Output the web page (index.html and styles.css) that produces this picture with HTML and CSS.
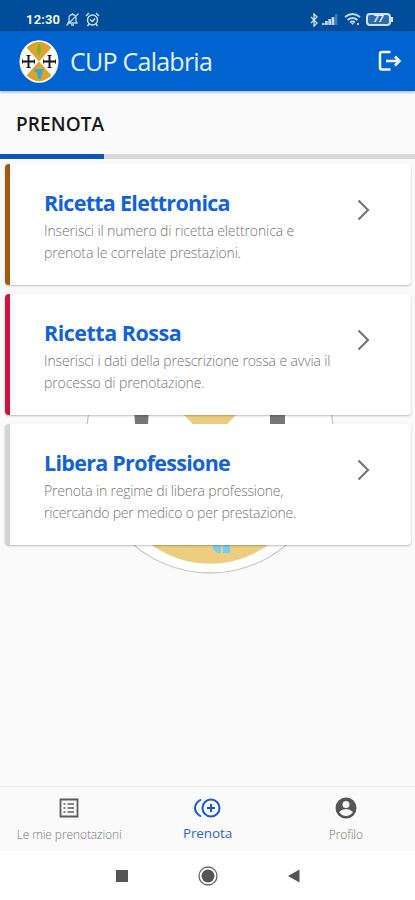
FILE: index.html
```html
<!DOCTYPE html>
<html lang="it">
<head>
    <meta charset="UTF-8">
    <meta name="viewport" content="width=device-width, initial-scale=1.0">
    <title>CUP Calabria</title>
    <link rel="stylesheet" href="styles.css">
</head>
<body>
    <div class="status">
        <span class="time">12:30</span>
        <svg class="mute" width="15" height="15" viewBox="0 0 15 15" fill="none" stroke="#c3d5eb" stroke-width="1.3">
            <path d="M3 11h9l-1-2V6a3.5 3.5 0 0 0-7 0v3zM6 13h3M7.500 1v2M1.500 13.500 13.500 1.500"/>
        </svg>
        <svg width="15" height="15" viewBox="0 0 15 15" fill="none" stroke="#d3e1f1" stroke-width="1.4">
            <circle cx="7.500" cy="8" r="5"/><path d="M1 4l3-3M14 4l-3-3M5 7.500l2.500 2 2.500-3M4 12l-1.500 2M11 12l1.500 2"/>
        </svg>
        <div class="signals">
            <svg width="9" height="14" viewBox="0 0 9 14" fill="none" stroke="#d3e1f1" stroke-width="1.3">
                <path d="M1 4l6 6-3 3V1l3 3-6 6"/>
            </svg>
            <svg class="bars" width="16" height="12" viewBox="0 0 16 12" fill="#c3d5eb">
                <path d="M0 9h2.500v2H0zM3 7h2.800v4H3zM6.300 5h2.800v6H6.300zM9.600 3h2.800v8H9.600z"/><path d="M13 0h2.300v11H13z" opacity=".35"/>
            </svg>
            <svg class="wifi" width="18" height="15" viewBox="0 0 18 15" fill="none" stroke="#c3d5eb" stroke-width="2">
                <path d="M1 5q7.500-6 15 0M3.500 8q5-4 10 0M6 10.500q2.500-2 5 0"/><path d="M7 11h3l-1.500 2zM13 11h2v2h-2z" fill="#c3d5eb" stroke="none"/>
            </svg>
            <div class="battery">77</div>
        </div>
    </div>

    <header>
        <svg class="logo" width="40" height="43" viewBox="0 0 40 43">
            <ellipse cx="20" cy="21.500" rx="19.500" ry="21.300" fill="#fff"/>
            <path d="M20 21.500 7.500 7.500Q20-4 32.500 7.500zM20 21.500 7.500 35.500Q20 47 32.500 35.500z" fill="#dfa32b"/>
            <path d="M20 3q2 2 1.500 5l1 3-2 3-.5 3-1-3-1.500-3 1-4z" fill="#75b82d"/>
            <path d="M16 29h9l-2 5-1 5h-3l-1-6-3-2z" fill="#36a9cf"/>
            <path d="M3 21.500h13M9.500 15v13M24 21.500h13M30.500 15v13" stroke="#151515" stroke-width="1.900"/>
            <path d="M3.500 19.500v4M15.500 19.500v4M7.500 15.500h4M7.500 27.500h4M24.500 19.500v4M36.500 19.500v4M28.500 15.500h4M28.500 27.500h4" stroke="#151515"/>
        </svg>
        <h1>CUP Calabria</h1>
        <svg class="logout" width="24" height="22" viewBox="0 0 24 22" fill="none" stroke="#f5f8fd" stroke-width="2.500">
            <path d="M12.500 2H4Q2 2 2 4v13.500q0 2 2 2h8.500M8 11h13M17 6.500 21.500 11 17 15.500"/>
        </svg>
    </header>

    <div class="tabs">
        <div class="tab">PRENOTA</div>
    </div>

    <main>
        <svg class="emblem" width="250" height="266" viewBox="0 0 250 266">
            <ellipse cx="125" cy="133" rx="124" ry="132" fill="#fff" stroke="#c8c8c8" stroke-width="1.300"/>
            <path d="M125 134 44 50A110 123 0 0 1 206 50z" fill="#edcd80"/>
            <path d="M125 134 44 216A110 123 0 0 0 206 216z" fill="#edcd80"/>
            <path d="M49 100h15l-1 16H50zM185 100h15v16h-15z" fill="#777"/>
            <path d="M128 225h8v20h-4l-4-4zM138 225h7v20h-7z" fill="#79cdf3"/>
        </svg>
        <a class="card brown">
            <div class="text">
                <h2>Ricetta Elettronica</h2>
                <p>Inserisci il numero di ricetta elettronica e<br>prenota le correlate prestazioni.</p>
            </div>
            <svg class="arrow" width="14" height="22" viewBox="0 0 14 22"><path d="M1.500 1.500 11 11l-9.500 9.500"/></svg>
        </a>
        <a class="card red">
            <div class="text">
                <h2>Ricetta Rossa</h2>
                <p>Inserisci i dati della prescrizione rossa e avvia il<br>processo di prenotazione.</p>
            </div>
            <svg class="arrow" width="14" height="22" viewBox="0 0 14 22"><path d="M1.500 1.500 11 11l-9.500 9.500"/></svg>
        </a>
        <a class="card grey">
            <div class="text">
                <h2>Libera Professione</h2>
                <p>Prenota in regime di libera professione,<br>ricercando per medico o per prestazione.</p>
            </div>
            <svg class="arrow" width="14" height="22" viewBox="0 0 14 22"><path d="M1.500 1.500 11 11l-9.500 9.500"/></svg>
        </a>
    </main>

    <nav>
        <a class="item">
            <svg width="28" height="24" viewBox="0 0 28 24" fill="none" stroke="#5d5d5d" stroke-width="1.800">
                <path d="M5.500 3.500h17v17h-17z"/><path d="M8.500 8h2M12.500 8h6.500M8.500 12h2M12.500 12h6.500M8.500 16h2M12.500 16h6.500" stroke-width="1.600"/>
            </svg>
            <span>Le mie prenotazioni</span>
        </a>
        <a class="item active">
            <svg width="28" height="24" viewBox="0 0 28 24" fill="none" stroke="#1758cb" stroke-width="2">
                <circle cx="18" cy="12" r="8.500"/><path d="M18 8v8M14 12h8M8 3.500q-6 3.500-6 8.500t6 8.500"/>
            </svg>
            <span>Prenota</span>
        </a>
        <a class="item">
            <svg width="28" height="24" viewBox="0 0 28 24">
                <circle cx="14" cy="12" r="10.500" fill="#555"/><circle cx="14" cy="8.500" r="3.500" fill="#fafafa"/><path d="M7 16q3-3 7-3t7 3q-3 4-7 4t-7-4z" fill="#fafafa"/>
            </svg>
            <span>Profilo</span>
        </a>
    </nav>

    <footer>
        <svg width="20" height="20" viewBox="0 0 20 20"><path d="M4 4h12v12H4z" fill="#555"/></svg>
        <svg width="20" height="20" viewBox="0 0 20 20"><circle cx="10" cy="10" r="9" fill="none" stroke="#666" stroke-width="1.300"/><circle cx="10" cy="10" r="6.500" fill="#555"/></svg>
        <svg width="20" height="20" viewBox="0 0 20 20"><path d="M15.500 3.500v13L4 10z" fill="#555"/></svg>
    </footer>
</body>
</html>
```
FILE: styles.css
```css
* {
box-sizing: border-box;
margin: 0;
padding: 0;
}

body {
width: 415px;
height: 900px;
overflow: hidden;
display: flex;
flex-direction: column;
background: #fafafa;
font-family: "Open Sans", "Noto Sans", sans-serif;
}

svg {
display: block;
flex: none;
}

.status {
height: 31px;
padding: 8px 24px 0 26px;
display: flex;
align-items: center;
background: #004d99;
color: #fff;
font-family: Roboto, sans-serif;
}

.time {
width: 34px;
font-size: 13px;
font-weight: 600;
letter-spacing: 0.2px;
}

.mute {
margin: 0 5px;
}

.signals {
margin-left: auto;
display: flex;
align-items: center;
}

.bars {
margin: 0 6px 0 3px;
}

.wifi {
margin-right: 4px;
}

.battery {
position: relative;
width: 25px;
height: 13px;
border: 2px solid #d3e1f1;
border-radius: 4px;
background: #2b6db0;
font-size: 9px;
font-weight: bold;
font-style: italic;
line-height: 9px;
text-align: center;
}

.battery::after {
content: "";
position: absolute;
right: -4px;
top: 2px;
width: 2px;
height: 5px;
background: #d3e1f1;
}

header {
height: 60px;
padding: 0 13px 0 19px;
display: flex;
align-items: center;
background: #0063cf;
box-shadow: 0 1px 3px rgba(0, 0, 0, 0.35);
color: #e5effc;
}

h1 {
margin-left: 11px;
font-size: 25px;
font-weight: 400;
line-height: 30px;
letter-spacing: -0.75px;
white-space: nowrap;
}

.logout {
margin-left: auto;
}

.tabs {
height: 68px;
border-bottom: 5px solid #d9d9d9;
}

.tab {
width: 104px;
height: 68px;
padding: 19px 0 0 16px;
border-bottom: 5px solid #0b56bd;
color: #191919;
font-size: 19px;
font-weight: 600;
line-height: 28px;
letter-spacing: 0.1px;
white-space: nowrap;
}

main {
position: relative;
flex: 1;
padding: 5px 4px 0 5px;
}

.emblem {
position: absolute;
left: 85px;
top: 149px;
}

.card {
position: relative;
display: flex;
height: 121px;
margin-bottom: 9px;
padding: 24px 40px 0 34px;
border-left: 5px solid;
border-radius: 4px;
background: #fff;
box-shadow: 0 1px 2px rgba(0, 0, 0, 0.25);
}

.brown {
border-color: #a35a0b;
}

.red {
border-color: #d3113d;
}

.grey {
border-color: #d5d5d5;
}

h2 {
color: #1262d9;
font-size: 21.5px;
font-weight: 700;
line-height: 30px;
letter-spacing: -0.72px;
white-space: nowrap;
}

.red h2 {
letter-spacing: -0.5px;
}

p {
margin-top: 2px;
color: #757575;
font-size: 14px;
font-weight: 300;
line-height: 22px;
letter-spacing: -0.12px;
white-space: nowrap;
}

.grey p {
letter-spacing: -0.2px;
}

.arrow {
margin: 11px 0 0 auto;
fill: none;
stroke: #777;
stroke-width: 2.2;
}

nav {
height: 65px;
border-top: 1px solid #eee;
display: grid;
grid-template-columns: repeat(3, 1fr);
}

.item {
display: flex;
flex-direction: column;
align-items: center;
padding-top: 9px;
color: #777;
font-size: 12px;
font-weight: 300;
line-height: 20px;
letter-spacing: -0.1px;
white-space: nowrap;
}

.item span {
margin-top: 5px;
}

.active {
color: #2868c8;
font-size: 13.5px;
font-weight: 400;
}

.active span {
margin-top: 3px;
}

footer {
height: 49px;
display: flex;
justify-content: center;
align-items: center;
gap: 66px;
background: #fff;
}
```
